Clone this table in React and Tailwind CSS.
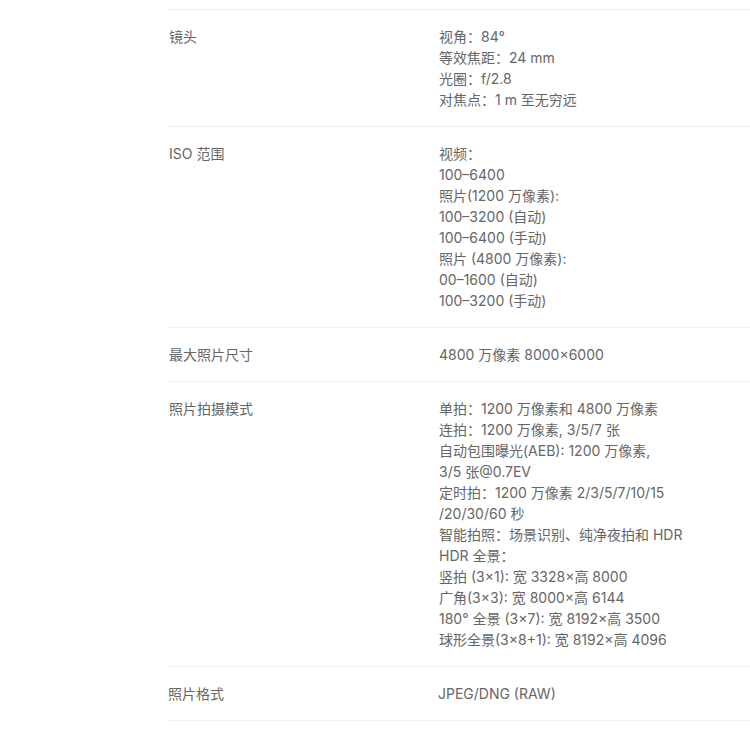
import React from "react";

const specs = [
  {
    label: "镜头",
    lines: ["视角：84°", "等效焦距：24 mm", "光圈：f/2.8", "对焦点：1 m 至无穷远"],
  },
  {
    label: "ISO 范围",
    lines: [
      "视频：",
      "100–6400",
      "照片(1200 万像素):",
      "100–3200 (自动)",
      "100–6400 (手动)",
      "照片 (4800 万像素):",
      "00–1600 (自动)",
      "100–3200 (手动)",
    ],
  },
  { label: "最大照片尺寸", lines: ["4800 万像素 8000×6000"] },
  {
    label: "照片拍摄模式",
    lines: [
      "单拍：1200 万像素和 4800 万像素",
      "连拍：1200 万像素, 3/5/7 张",
      "自动包围曝光(AEB): 1200 万像素,",
      "3/5 张@0.7EV",
      "定时拍：1200 万像素 2/3/5/7/10/15",
      "/20/30/60 秒",
      "智能拍照：场景识别、纯净夜拍和 HDR",
      "HDR 全景：",
      "竖拍 (3×1): 宽 3328×高 8000",
      "广角(3×3): 宽 8000×高 6144",
      "180° 全景 (3×7): 宽 8192×高 3500",
      "球形全景(3×8+1): 宽 8192×高 4096",
    ],
  },
  { label: "照片格式", lines: ["JPEG/DNG (RAW)"], shifted: true },
];

const SpecRow = ({ label, lines, shifted }) => (
  <div className="flex border-b border-[#eeeeee] py-4">
    <div className={`w-[271px] shrink-0 ${shifted ? "" : "pl-px"}`}>{label}</div>
    <div className={`flex-1 ${shifted ? "-ml-px" : ""}`}>
      {lines.map((line, i) => (
        <div key={i} className="whitespace-nowrap">
          {line}
        </div>
      ))}
    </div>
  </div>
);

export default function App() {
  return (
    <div
      className="min-h-[730px] w-[750px] overflow-hidden bg-white pt-[9px] text-[14px] leading-[21px] text-[#666666]"
      style={{ fontFamily: 'Inter, "Noto Sans CJK SC", sans-serif' }}
    >
      <div className="ml-[168px] border-t border-[#eeeeee]">
        {specs.map((s) => (
          <SpecRow key={s.label} {...s} />
        ))}
      </div>
    </div>
  );
}
